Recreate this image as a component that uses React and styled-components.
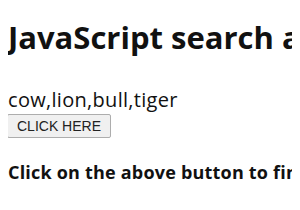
import styled, { createGlobalStyle } from "styled-components";

const Global = createGlobalStyle`
  body {
    margin: 8px;
    font-family: "Open Sans", "Noto Sans", sans-serif;
    color: #000;
    background: #fff;
    overflow: hidden;
  }
`;

const Page = styled.div`
  white-space: nowrap;
`;

const Title = styled.h1`
  font-size: 31px;
  font-weight: 700;
  margin: 11px 0 33px;
  line-height: 36px;
  color: #111;
`;

const Animals = styled.div`
  font-size: 20px;
  line-height: 24px;
  letter-spacing: 0.3px;
  color: #111;
`;

const Button = styled.button`
  display: block;
  font-family: "Liberation Sans", Arial, sans-serif;
  font-size: 14px;
  line-height: 16px;
  padding: 3px 9px;
  margin: 2px 0 0 -1px;
  background: #f0f0f0;
  border: 1px solid #adadad;
  border-radius: 2px;
  color: #222;
`;

const Result = styled.h3`
  font-size: 18px;
  font-weight: 700;
  line-height: 22px;
  letter-spacing: 0.2px;
  margin: 23px 0;
  color: #111;
`;

export default function App() {
  return (
    <Page>
      <Global />
      <Title>JavaScript search an array</Title>
      <Animals>cow,lion,bull,tiger</Animals>
      <Button>CLICK HERE</Button>
      <Result>Click on the above button to find the element</Result>
    </Page>
  );
}
